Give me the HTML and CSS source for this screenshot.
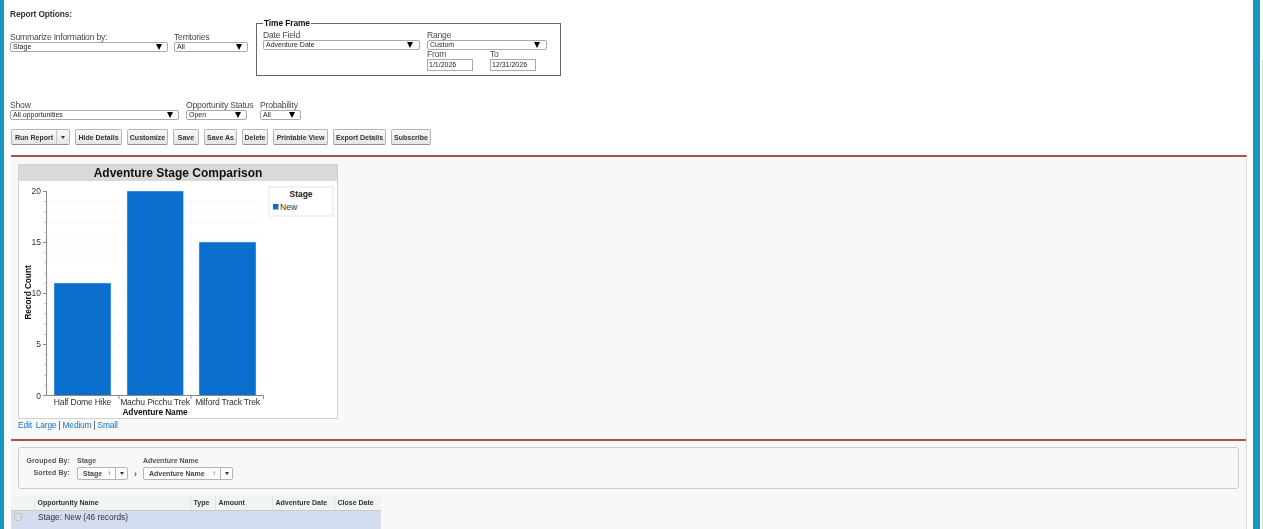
FILE: index.html
```html
<!DOCTYPE html>
<html lang="en">
<head>
<meta charset="utf-8">
<title>Adventure Stage Report</title>
<link rel="stylesheet" href="styles.css">
</head>
<body>
<div class="edge-left"></div>
<main class="content">
  <section class="options">
    <h2 class="options-title">Report Options:</h2>
    <div class="filters-top">
      <div class="field field-summarize"><label>Summarize Information by:</label><div class="sel"><span>Stage</span><i class="caret"></i></div></div>
      <div class="field field-territory"><label>Territories</label><div class="sel"><span>All</span><i class="caret"></i></div></div>
      <fieldset class="timeframe">
        <legend>Time Frame</legend>
        <div class="tf-grid">
          <div class="field field-date"><label>Date Field</label><div class="sel"><span>Adventure Date</span><i class="caret"></i></div></div>
          <div class="tf-right">
            <div class="field field-range"><label>Range</label><div class="sel"><span>Custom</span><i class="caret"></i></div></div>
            <div class="tf-dates">
              <div class="field field-from"><label>From</label><div class="inp">1/1/2026</div></div>
              <div class="field field-to"><label>To</label><div class="inp">12/31/2026</div></div>
            </div>
          </div>
        </div>
      </fieldset>
    </div>
    <div class="filters-second">
      <div class="field field-show"><label>Show</label><div class="sel"><span>All opportunities</span><i class="caret"></i></div></div>
      <div class="field field-status"><label>Opportunity Status</label><div class="sel"><span>Open</span><i class="caret"></i></div></div>
      <div class="field field-prob"><label>Probability</label><div class="sel"><span>All</span><i class="caret"></i></div></div>
    </div>
    <div class="toolbar">
      <div class="btn btn-split"><span class="btn-main">Run Report</span><span class="btn-arrow"><i class="caret-sm"></i></span></div>
      <div class="btn btn-hide">Hide Details</div>
      <div class="btn btn-cust">Customize</div>
      <div class="btn btn-save">Save</div>
      <div class="btn btn-saveas">Save As</div>
      <div class="btn btn-del">Delete</div>
      <div class="btn btn-print">Printable View</div>
      <div class="btn btn-export">Export Details</div>
      <div class="btn btn-sub">Subscribe</div>
    </div>
  </section>

  <section class="panel">
    <div class="chart-section">
      <div class="chart-box">
        <div class="chart-title">Adventure Stage Comparison</div>
        <svg class="chart" width="318" height="237" viewBox="19 181 318 237" xmlns="http://www.w3.org/2000/svg">
          <g class="grid">
            <path d="M47 201.7H263M47 211.9H263M47 222.1H263M47 232.3H263M47 242.5H263M47 252.7H263M47 262.9H263M47 273.1H263M47 283.3H263M47 293.5H263M47 303.7H263M47 313.9H263M47 324.1H263M47 334.3H263M47 344.5H263M47 354.7H263M47 364.9H263M47 375.1H263M47 385.3H263"/>
          </g>
          <g class="bars">
            <rect x="54" y="283" width="57" height="112.5"/>
            <rect x="127" y="191" width="56.5" height="204.5"/>
            <rect x="199" y="242" width="57" height="153.5"/>
          </g>
          <g class="axis">
            <path d="M46.5 191V395.5H263.5M119 395.5V399M191 395.5V399M263.5 395.5V399"/>
            <path d="M43 191.5H46.5M43 242.5H46.5M43 293.5H46.5M43 344.5H46.5M43 395.5H46.5"/>
            <path class="minor" d="M44.5 201.5H46.5M44.5 211.5H46.5M44.5 222.5H46.5M44.5 232.5H46.5M44.5 252.5H46.5M44.5 262.5H46.5M44.5 273.5H46.5M44.5 283.5H46.5M44.5 303.5H46.5M44.5 313.5H46.5M44.5 324.5H46.5M44.5 334.5H46.5M44.5 354.5H46.5M44.5 364.5H46.5M44.5 375.5H46.5M44.5 385.5H46.5"/>
          </g>
          <g class="tick-labels">
            <text x="41" y="194">20</text>
            <text x="41" y="245">15</text>
            <text x="41" y="296">10</text>
            <text x="41" y="347">5</text>
            <text x="41" y="399">0</text>
          </g>
          <g class="cat-labels">
            <text x="82.5" y="405">Half Dome Hike</text>
            <text x="155" y="405">Machu Picchu Trek</text>
            <text x="227.5" y="405">Milford Track Trek</text>
          </g>
          <text class="axis-title" x="155" y="415">Adventure Name</text>
          <text class="axis-title" transform="translate(30.5 292.5) rotate(-90)">Record Count</text>
          <rect class="legend-box" x="269" y="187" width="64" height="29"/>
          <text class="legend-title" x="301" y="197">Stage</text>
          <rect class="legend-swatch" x="273" y="204" width="5.5" height="5.5"/>
          <text class="legend-item" x="280" y="210">New</text>
        </svg>
      </div>
      <div class="chart-links"><a>Edit</a><a class="link-large">Large</a><span class="sep">|</span><a>Medium</a><span class="sep">|</span><a>Small</a></div>
    </div>

    <div class="grouping">
      <div class="grouping-labels">
        <div class="g-label">Grouped By:</div>
        <div class="g-label">Sorted By:</div>
      </div>
      <div class="group-col group-stage">
        <div class="g-name">Stage</div>
        <div class="sort-btn"><span class="sort-main">Stage <b class="up">↑</b></span><span class="sort-arrow"><i class="caret-sm"></i></span></div>
      </div>
      <span class="chev">›</span>
      <div class="group-col group-adv">
        <div class="g-name">Adventure Name</div>
        <div class="sort-btn"><span class="sort-main">Adventure Name <b class="up">↑</b></span><span class="sort-arrow"><i class="caret-sm"></i></span></div>
      </div>
    </div>

    <table class="report">
      <colgroup><col class="c0"><col class="c1"><col class="c2"><col class="c3"><col class="c4"><col class="c5"></colgroup>
      <thead>
        <tr><th></th><th>Opportunity Name</th><th>Type</th><th>Amount</th><th>Adventure Date</th><th>Close Date</th></tr>
      </thead>
      <tbody>
        <tr class="group-row"><td><span class="check"></span></td><td colspan="5">Stage: New (46 records)</td></tr>
      </tbody>
    </table>
  </section>
</main>
<div class="edge-right"></div>
<div class="scroll-gutter"></div>
</body>
</html>
```
FILE: styles.css
```css
* { box-sizing: border-box; }
html, body { margin: 0; height: 529px; overflow: hidden; }
body {
  display: flex;
  background: #fff;
  font-family: "Liberation Sans", Arial, sans-serif;
  color: #333;
  font-size: 8px;
}
.edge-left { flex: 0 0 4px; background: #1797c0; }
.edge-right { flex: 0 0 7px; background: #1797c0; }
.scroll-gutter { flex: 0 0 3px; margin-top: 60px; border-right: 1.5px solid #d8d8d8; }
.content { flex: 1; min-width: 0; padding: 0 6px 0 0; filter: blur(.3px); }

.options { padding-left: 6px; height: 155px; }
.options-title { margin: 0; padding-top: 10px; font-size: 8.4px; line-height: 9px; font-weight: bold; color: #333; letter-spacing: -.12px; }

.filters-top { display: flex; align-items: flex-start; margin-top: 4px; height: 54px; }
.filters-second { display: flex; margin-top: 24px; gap: 7px; }
.field label { display: block; font-size: 8.6px; letter-spacing: -.22px; line-height: 9px; color: #4a4a4a; white-space: nowrap; }
.sel {
  display: flex; align-items: center; justify-content: space-between;
  height: 10px; background: #fff;
  border: 1px solid #a9a9a9; border-radius: 2px;
  padding: 0 5px 0 2px;
  font-size: 7px; line-height: 8px; color: #222;
}
.caret { width: 0; height: 0; border-left: 3px solid transparent; border-right: 3px solid transparent; border-top: 6px solid #000; }
.filters-top > .field { margin-top: 10px; }
.field-summarize { width: 158px; }
.field-territory { width: 74px; margin-left: 6px; }
.timeframe {
  margin: -4px 0 0 8px; width: 305px; height: 57px; min-width: 0;
  border: 1px solid #666; padding: 0 0 0 6px;
}
.timeframe legend { font-size: 8.4px; line-height: 9px; font-weight: bold; color: #111; padding: 0 1px; letter-spacing: -.1px; }
.tf-grid { display: flex; gap: 7px; margin-top: 3px; }
.field-date { width: 157px; }
.field-date .sel, .field-range .sel { padding-right: 6px; }
.field-range { width: 120px; }
.tf-dates { display: flex; gap: 17px; }
.field-from, .field-to { width: 46px; }
.inp { height: 12px; border: 1px solid #a9a9a9; font-size: 7px; line-height: 10px; padding-left: 1px; color: #222; background: #fff; }

.field-show { width: 169px; }
.field-status { width: 61px; }
.field-prob { width: 41px; margin-left: 6px; }

.toolbar { display: flex; gap: 5px; margin-top: 9px; padding-left: 1px; }
.btn {
  height: 16px; display: flex; align-items: center; justify-content: center;
  border: 1px solid #b5b5b5; border-bottom-color: #8f8f8f; border-radius: 2px;
  background: linear-gradient(#f8f8f8, #e6e6e6);
  font-size: 7px; font-weight: bold; color: #333; white-space: nowrap;
}
.btn-split { width: 59px; justify-content: flex-start; }
.btn-main { flex: 1; text-align: center; }
.btn-arrow { flex: 0 0 13px; height: 100%; border-left: 1px solid #c8c8c8; display: flex; align-items: center; justify-content: center; }
.caret-sm { width: 0; height: 0; border-left: 2px solid transparent; border-right: 2px solid transparent; border-top: 3px solid #333; }
.btn-hide { width: 47px; }
.btn-cust { width: 41px; }
.btn-save { width: 26px; }
.btn-saveas { width: 33px; }
.btn-del { width: 26px; }
.btn-print { width: 55px; }
.btn-export { width: 53px; }
.btn-sub { width: 40px; }

.panel {
  margin-left: 7px;
  height: 374px; background: #f8f8f8;
  border-top: 2px solid #a8534a;
  border-right: 1px solid #ddd;
}
.chart-section { height: 284px; border-bottom: 2px solid #a8534a; padding: 7px 0 0 7px; }
.chart-box { width: 320px; height: 255px; background: #fff; border: 1px solid #d2d2d2; }
.chart-title { height: 16px; background: #d9d9d9; text-align: center; font-size: 12px; font-weight: bold; line-height: 16px; color: #111; }
.chart { display: block; }
.grid path { fill: none; stroke: #e8e8e8; stroke-width: 1; stroke-dasharray: 1 3; }
.bars rect { fill: #0b6fce; stroke: #cfe1f3; stroke-width: .5; }
.axis path { fill: none; stroke: #888; stroke-width: 1; }
.axis path.minor { stroke: #bbb; }
.tick-labels text { font-size: 8.5px; fill: #333; text-anchor: end; }
.cat-labels text { font-size: 8.6px; letter-spacing: -.2px; fill: #333; text-anchor: middle; }
.axis-title { font-size: 8.4px; letter-spacing: -.1px; font-weight: bold; fill: #111; text-anchor: middle; }
.legend-box { fill: #fff; stroke: #eee; stroke-width: 1.5; }
.legend-title { font-size: 8.4px; font-weight: bold; fill: #222; text-anchor: middle; }
.legend-swatch { fill: #0b6fce; }
.legend-item { font-size: 8.6px; fill: #333; }
.chart-links { margin-top: 1px; font-size: 8.4px; letter-spacing: -.15px; line-height: 10px; color: #333; }
.chart-links a { color: #1a72c4; }
.chart-links .link-large { margin-left: 4px; }
.sep { margin: 0 2px; }

.grouping {
  display: flex; align-items: flex-start;
  margin: 6px 7px 0 7px; height: 42px;
  border: 1px solid #ccc; border-radius: 3px;
  padding: 9px 0 0 7px;
  font-size: 7px; color: #444;
}
.grouping-labels { width: 44px; text-align: right; }
.g-label { line-height: 8px; font-weight: bold; color: #555; letter-spacing: .1px; }
.g-label + .g-label { margin-top: 4px; }
.group-col { display: flex; flex-direction: column; }
.group-stage { margin-left: 7px; }
.g-name { line-height: 8px; font-weight: bold; color: #555; height: 10px; }
.sort-btn { display: flex; height: 13px; border: 1px solid #b5b5b5; border-radius: 2px; background: #fdfdfd; font-weight: bold; color: #444; }
.sort-main { display: flex; align-items: center; justify-content: space-between; padding: 0 4px 0 5px; border-right: 1px solid #b5b5b5; }
.group-stage .sort-btn { width: 51px; }
.group-stage .sort-main { width: 38px; }
.group-adv .sort-btn { width: 90px; }
.group-adv .sort-main { width: 77px; }
.sort-arrow { flex: 1; display: flex; align-items: center; justify-content: center; }
.up { font-size: 8px; color: #777; font-weight: bold; }
.chev { margin: 10px 0 0; width: 15px; text-align: center; font-size: 9px; line-height: 14px; color: #555; font-weight: bold; }

.report { border-collapse: collapse; table-layout: fixed; width: 370px; margin-top: 7px; font-size: 7px; }
.c0 { width: 23px; } .c1 { width: 156px; } .c2 { width: 25px; } .c3 { width: 57px; } .c4 { width: 62px; } .c5 { width: 47px; }
.report th { height: 14px; background: #f2f3f3; border-left: 1px solid #e4e4e4; border-bottom: 1px solid #c9c9c9; text-align: left; font-weight: bold; padding: 0 0 0 3px; color: #333; }
.report th:first-child { border-left: 0; }
.group-row td { background: #d4dcf0; height: 19px; padding: 0 0 6px 4px; font-size: 8.3px; color: #333; }
.group-row td:first-child { padding-left: 3px; }
.check { display: block; width: 8px; height: 8px; border: 1px solid #c4c4c4; border-radius: 2px; background: #dedede; }
```
